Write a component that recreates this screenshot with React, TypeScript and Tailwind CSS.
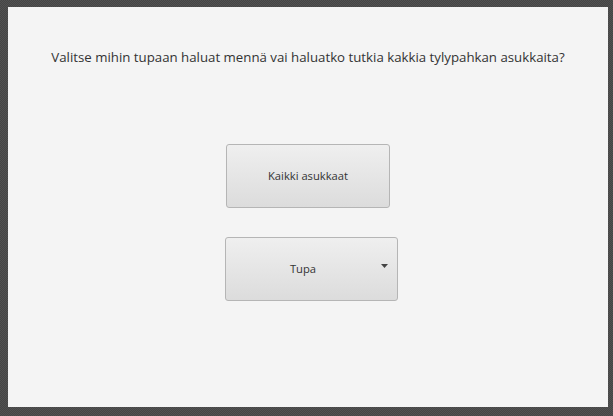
export default function App() {
  return (
    <div className="flex h-[416px] w-[613px] bg-[#4b4b4b] bg-[repeating-conic-gradient(#454545_0%_25%,#525252_0%_50%)] bg-[length:2px_2px] pl-[8px] pt-[7px] font-['Open_Sans',sans-serif]">
      <div className="flex h-[400px] w-[600px] flex-col items-center bg-[#f4f4f4] text-[#333]">
        <p className="mt-[40px] text-[13.25px] leading-[20px]">
          Valitse mihin tupaan haluat mennä vai haluatko tutkia kakkia tylypahkan asukkaita?
        </p>
        <button className="mt-[77px] flex h-[64px] w-[164px] items-center justify-center rounded-[3px] border border-[#b5b5b5] bg-gradient-to-b from-[#efefef] to-[#dcdcdc] text-[11.2px]">
          Kaikki asukkaat
        </button>
        <button className="relative ml-[6px] mt-[29px] flex h-[64px] w-[173px] items-center justify-center rounded-[3px] border border-[#b5b5b5] bg-gradient-to-b from-[#efefef] to-[#dcdcdc] pr-[16px] text-[11.2px]">
          <span>Tupa</span>
          <svg className="absolute right-[9px] top-[26px]" width="7" height="4" viewBox="0 0 7 4">
            <path d="M0 0 L7 0 L3.5 4 Z" fill="#444" />
          </svg>
        </button>
      </div>
    </div>
  );
}
